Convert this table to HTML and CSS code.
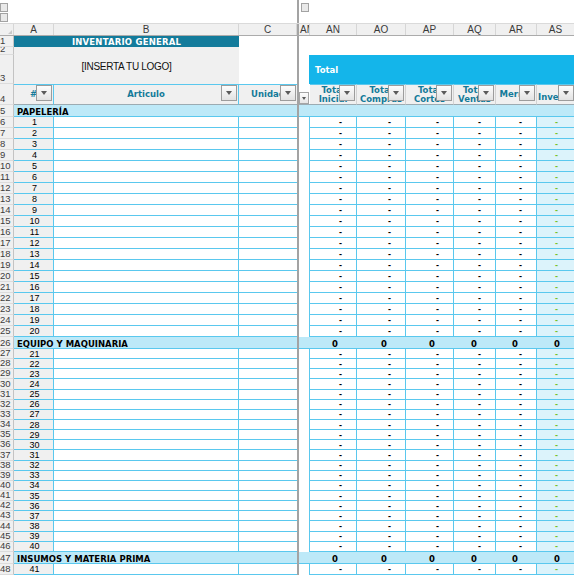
FILE: index.html
```html
<!DOCTYPE html>
<html lang="es">
<head>
<meta charset="utf-8">
<title>Inventario General</title>
<link rel="stylesheet" href="styles.css">
</head>
<body>
<div class="sheet">
  <div class="top">
    <div class="tl"><span class="ob"></span><span class="ob"></span></div>
    <div class="fz"></div>
    <div class="tr"><span class="ob"></span></div>
  </div>

  <div class="row ch">
    <div class="corner"></div><div>A</div><div>B</div><div>C</div><div class="fz"></div><div class="am">AM</div><div>AN</div><div>AO</div><div>AP</div><div>AQ</div><div>AR</div><div>AS</div>
  </div>

  <div class="row r1">
    <div class="rh">1</div><div class="title">INVENTARIO GENERAL</div><div class="c"></div><div class="fz"></div><div class="am"></div><div class="blank"></div>
  </div>

  <div class="row logo">
    <div class="rh rh2">2</div><div class="rh rh3">3</div>
    <div class="img">[INSERTA TU LOGO]</div>
    <div class="c"></div><div class="fz"></div><div class="am"></div>
    <div class="blank"></div>
    <div class="band">Total</div>
  </div>

  <div class="row hdr">
    <div class="rh">4</div>
    <div class="h a">#<span class="dd"></span></div>
    <div class="h b">Articulo<span class="dd"></span></div>
    <div class="h c">Unidad<span class="dd"></span></div>
    <div class="fz"></div>
    <div class="am"><span class="ddm"></span></div>
    <div class="h n"><span class="t2">Total<br>Inicial</span><span class="dd"></span></div>
    <div class="h n"><span class="t2">Total<br>Compras</span><span class="dd"></span></div>
    <div class="h n"><span class="t2">Total<br>Cortes</span><span class="dd"></span></div>
    <div class="h n"><span class="t2">Total<br>Ventas</span><span class="dd"></span></div>
    <div class="h n">Merma<span class="dd"></span></div>
    <div class="h s">Inventario<span class="dd"></span></div>
  </div>

  <div class="row sec"><div class="rh">5</div><div class="lbl">PAPELERÍA</div><div class="fz"></div><div class="am"></div><div class="z"></div><div class="z"></div><div class="z"></div><div class="z"></div><div class="z"></div><div class="z s"></div></div>

  <div class="row d"><div class="rh">6</div><div class="a">1</div><div class="b"></div><div class="c"></div><div class="fz"></div><div class="am"></div><div class="v">-</div><div class="v">-</div><div class="v">-</div><div class="v">-</div><div class="v">-</div><div class="s">-</div></div>
  <div class="row d"><div class="rh">7</div><div class="a">2</div><div class="b"></div><div class="c"></div><div class="fz"></div><div class="am"></div><div class="v">-</div><div class="v">-</div><div class="v">-</div><div class="v">-</div><div class="v">-</div><div class="s">-</div></div>
  <div class="row d"><div class="rh">8</div><div class="a">3</div><div class="b"></div><div class="c"></div><div class="fz"></div><div class="am"></div><div class="v">-</div><div class="v">-</div><div class="v">-</div><div class="v">-</div><div class="v">-</div><div class="s">-</div></div>
  <div class="row d"><div class="rh">9</div><div class="a">4</div><div class="b"></div><div class="c"></div><div class="fz"></div><div class="am"></div><div class="v">-</div><div class="v">-</div><div class="v">-</div><div class="v">-</div><div class="v">-</div><div class="s">-</div></div>
  <div class="row d"><div class="rh">10</div><div class="a">5</div><div class="b"></div><div class="c"></div><div class="fz"></div><div class="am"></div><div class="v">-</div><div class="v">-</div><div class="v">-</div><div class="v">-</div><div class="v">-</div><div class="s">-</div></div>
  <div class="row d"><div class="rh">11</div><div class="a">6</div><div class="b"></div><div class="c"></div><div class="fz"></div><div class="am"></div><div class="v">-</div><div class="v">-</div><div class="v">-</div><div class="v">-</div><div class="v">-</div><div class="s">-</div></div>
  <div class="row d"><div class="rh">12</div><div class="a">7</div><div class="b"></div><div class="c"></div><div class="fz"></div><div class="am"></div><div class="v">-</div><div class="v">-</div><div class="v">-</div><div class="v">-</div><div class="v">-</div><div class="s">-</div></div>
  <div class="row d"><div class="rh">13</div><div class="a">8</div><div class="b"></div><div class="c"></div><div class="fz"></div><div class="am"></div><div class="v">-</div><div class="v">-</div><div class="v">-</div><div class="v">-</div><div class="v">-</div><div class="s">-</div></div>
  <div class="row d"><div class="rh">14</div><div class="a">9</div><div class="b"></div><div class="c"></div><div class="fz"></div><div class="am"></div><div class="v">-</div><div class="v">-</div><div class="v">-</div><div class="v">-</div><div class="v">-</div><div class="s">-</div></div>
  <div class="row d"><div class="rh">15</div><div class="a">10</div><div class="b"></div><div class="c"></div><div class="fz"></div><div class="am"></div><div class="v">-</div><div class="v">-</div><div class="v">-</div><div class="v">-</div><div class="v">-</div><div class="s">-</div></div>
  <div class="row d"><div class="rh">16</div><div class="a">11</div><div class="b"></div><div class="c"></div><div class="fz"></div><div class="am"></div><div class="v">-</div><div class="v">-</div><div class="v">-</div><div class="v">-</div><div class="v">-</div><div class="s">-</div></div>
  <div class="row d"><div class="rh">17</div><div class="a">12</div><div class="b"></div><div class="c"></div><div class="fz"></div><div class="am"></div><div class="v">-</div><div class="v">-</div><div class="v">-</div><div class="v">-</div><div class="v">-</div><div class="s">-</div></div>
  <div class="row d"><div class="rh">18</div><div class="a">13</div><div class="b"></div><div class="c"></div><div class="fz"></div><div class="am"></div><div class="v">-</div><div class="v">-</div><div class="v">-</div><div class="v">-</div><div class="v">-</div><div class="s">-</div></div>
  <div class="row d"><div class="rh">19</div><div class="a">14</div><div class="b"></div><div class="c"></div><div class="fz"></div><div class="am"></div><div class="v">-</div><div class="v">-</div><div class="v">-</div><div class="v">-</div><div class="v">-</div><div class="s">-</div></div>
  <div class="row d"><div class="rh">20</div><div class="a">15</div><div class="b"></div><div class="c"></div><div class="fz"></div><div class="am"></div><div class="v">-</div><div class="v">-</div><div class="v">-</div><div class="v">-</div><div class="v">-</div><div class="s">-</div></div>
  <div class="row d"><div class="rh">21</div><div class="a">16</div><div class="b"></div><div class="c"></div><div class="fz"></div><div class="am"></div><div class="v">-</div><div class="v">-</div><div class="v">-</div><div class="v">-</div><div class="v">-</div><div class="s">-</div></div>
  <div class="row d"><div class="rh">22</div><div class="a">17</div><div class="b"></div><div class="c"></div><div class="fz"></div><div class="am"></div><div class="v">-</div><div class="v">-</div><div class="v">-</div><div class="v">-</div><div class="v">-</div><div class="s">-</div></div>
  <div class="row d"><div class="rh">23</div><div class="a">18</div><div class="b"></div><div class="c"></div><div class="fz"></div><div class="am"></div><div class="v">-</div><div class="v">-</div><div class="v">-</div><div class="v">-</div><div class="v">-</div><div class="s">-</div></div>
  <div class="row d"><div class="rh">24</div><div class="a">19</div><div class="b"></div><div class="c"></div><div class="fz"></div><div class="am"></div><div class="v">-</div><div class="v">-</div><div class="v">-</div><div class="v">-</div><div class="v">-</div><div class="s">-</div></div>
  <div class="row d"><div class="rh">25</div><div class="a">20</div><div class="b"></div><div class="c"></div><div class="fz"></div><div class="am"></div><div class="v">-</div><div class="v">-</div><div class="v">-</div><div class="v">-</div><div class="v">-</div><div class="s">-</div></div>

  <div class="row sec"><div class="rh">26</div><div class="lbl">EQUIPO Y MAQUINARIA</div><div class="fz"></div><div class="am"></div><div class="z">0</div><div class="z">0</div><div class="z">0</div><div class="z">0</div><div class="z">0</div><div class="z s">0</div></div>

  <div class="row d sm"><div class="rh">27</div><div class="a">21</div><div class="b"></div><div class="c"></div><div class="fz"></div><div class="am"></div><div class="v">-</div><div class="v">-</div><div class="v">-</div><div class="v">-</div><div class="v">-</div><div class="s">-</div></div>
  <div class="row d sm"><div class="rh">28</div><div class="a">22</div><div class="b"></div><div class="c"></div><div class="fz"></div><div class="am"></div><div class="v">-</div><div class="v">-</div><div class="v">-</div><div class="v">-</div><div class="v">-</div><div class="s">-</div></div>
  <div class="row d sm"><div class="rh">29</div><div class="a">23</div><div class="b"></div><div class="c"></div><div class="fz"></div><div class="am"></div><div class="v">-</div><div class="v">-</div><div class="v">-</div><div class="v">-</div><div class="v">-</div><div class="s">-</div></div>
  <div class="row d sm"><div class="rh">30</div><div class="a">24</div><div class="b"></div><div class="c"></div><div class="fz"></div><div class="am"></div><div class="v">-</div><div class="v">-</div><div class="v">-</div><div class="v">-</div><div class="v">-</div><div class="s">-</div></div>
  <div class="row d sm"><div class="rh">31</div><div class="a">25</div><div class="b"></div><div class="c"></div><div class="fz"></div><div class="am"></div><div class="v">-</div><div class="v">-</div><div class="v">-</div><div class="v">-</div><div class="v">-</div><div class="s">-</div></div>
  <div class="row d sm"><div class="rh">32</div><div class="a">26</div><div class="b"></div><div class="c"></div><div class="fz"></div><div class="am"></div><div class="v">-</div><div class="v">-</div><div class="v">-</div><div class="v">-</div><div class="v">-</div><div class="s">-</div></div>
  <div class="row d sm"><div class="rh">33</div><div class="a">27</div><div class="b"></div><div class="c"></div><div class="fz"></div><div class="am"></div><div class="v">-</div><div class="v">-</div><div class="v">-</div><div class="v">-</div><div class="v">-</div><div class="s">-</div></div>
  <div class="row d sm"><div class="rh">34</div><div class="a">28</div><div class="b"></div><div class="c"></div><div class="fz"></div><div class="am"></div><div class="v">-</div><div class="v">-</div><div class="v">-</div><div class="v">-</div><div class="v">-</div><div class="s">-</div></div>
  <div class="row d sm"><div class="rh">35</div><div class="a">29</div><div class="b"></div><div class="c"></div><div class="fz"></div><div class="am"></div><div class="v">-</div><div class="v">-</div><div class="v">-</div><div class="v">-</div><div class="v">-</div><div class="s">-</div></div>
  <div class="row d sm"><div class="rh">36</div><div class="a">30</div><div class="b"></div><div class="c"></div><div class="fz"></div><div class="am"></div><div class="v">-</div><div class="v">-</div><div class="v">-</div><div class="v">-</div><div class="v">-</div><div class="s">-</div></div>
  <div class="row d sm"><div class="rh">37</div><div class="a">31</div><div class="b"></div><div class="c"></div><div class="fz"></div><div class="am"></div><div class="v">-</div><div class="v">-</div><div class="v">-</div><div class="v">-</div><div class="v">-</div><div class="s">-</div></div>
  <div class="row d sm"><div class="rh">38</div><div class="a">32</div><div class="b"></div><div class="c"></div><div class="fz"></div><div class="am"></div><div class="v">-</div><div class="v">-</div><div class="v">-</div><div class="v">-</div><div class="v">-</div><div class="s">-</div></div>
  <div class="row d sm"><div class="rh">39</div><div class="a">33</div><div class="b"></div><div class="c"></div><div class="fz"></div><div class="am"></div><div class="v">-</div><div class="v">-</div><div class="v">-</div><div class="v">-</div><div class="v">-</div><div class="s">-</div></div>
  <div class="row d sm"><div class="rh">40</div><div class="a">34</div><div class="b"></div><div class="c"></div><div class="fz"></div><div class="am"></div><div class="v">-</div><div class="v">-</div><div class="v">-</div><div class="v">-</div><div class="v">-</div><div class="s">-</div></div>
  <div class="row d sm"><div class="rh">41</div><div class="a">35</div><div class="b"></div><div class="c"></div><div class="fz"></div><div class="am"></div><div class="v">-</div><div class="v">-</div><div class="v">-</div><div class="v">-</div><div class="v">-</div><div class="s">-</div></div>
  <div class="row d sm"><div class="rh">42</div><div class="a">36</div><div class="b"></div><div class="c"></div><div class="fz"></div><div class="am"></div><div class="v">-</div><div class="v">-</div><div class="v">-</div><div class="v">-</div><div class="v">-</div><div class="s">-</div></div>
  <div class="row d sm"><div class="rh">43</div><div class="a">37</div><div class="b"></div><div class="c"></div><div class="fz"></div><div class="am"></div><div class="v">-</div><div class="v">-</div><div class="v">-</div><div class="v">-</div><div class="v">-</div><div class="s">-</div></div>
  <div class="row d sm"><div class="rh">44</div><div class="a">38</div><div class="b"></div><div class="c"></div><div class="fz"></div><div class="am"></div><div class="v">-</div><div class="v">-</div><div class="v">-</div><div class="v">-</div><div class="v">-</div><div class="s">-</div></div>
  <div class="row d sm"><div class="rh">45</div><div class="a">39</div><div class="b"></div><div class="c"></div><div class="fz"></div><div class="am"></div><div class="v">-</div><div class="v">-</div><div class="v">-</div><div class="v">-</div><div class="v">-</div><div class="s">-</div></div>
  <div class="row d sm"><div class="rh">46</div><div class="a">40</div><div class="b"></div><div class="c"></div><div class="fz"></div><div class="am"></div><div class="v">-</div><div class="v">-</div><div class="v">-</div><div class="v">-</div><div class="v">-</div><div class="s">-</div></div>

  <div class="row sec"><div class="rh">47</div><div class="lbl">INSUMOS Y MATERIA PRIMA</div><div class="fz"></div><div class="am"></div><div class="z">0</div><div class="z">0</div><div class="z">0</div><div class="z">0</div><div class="z">0</div><div class="z s">0</div></div>

  <div class="row d"><div class="rh">48</div><div class="a">41</div><div class="b"></div><div class="c"></div><div class="fz"></div><div class="am"></div><div class="v">-</div><div class="v">-</div><div class="v">-</div><div class="v">-</div><div class="v">-</div><div class="s">-</div></div>
</div>
</body>
</html>
```

FILE: styles.css
```css
:root {
  --cy: #5ac8ee;
  --teal: #137b9b;
  --band: #14b5ea;
  --sec: #bde9f8;
  --g: #f0f0f0;
  --hd: #137a99;
}
* { box-sizing: border-box; margin: 0; padding: 0; }
html, body { width: 574px; height: 575px; overflow: hidden; background: #fff; }
body { font-family: "Liberation Sans", Arial, sans-serif; font-size: 8px; color: #000; }
.sheet { width: 574px; height: 575px; overflow: hidden; }

/* top outline bar */
.top { display: grid; grid-template-columns: 297px 2px 1fr; height: 23px; }
.tl { display: flex; flex-direction: column; gap: 1px; padding-top: 3px; }
.tr { padding: 3px 0 0 2px; }
.ob { display: block; width: 8px; height: 9px; border: 1px solid #a3a3a3; background: #e9e9e9; }
.top > .fz { background: #a3a3a3; }

/* generic row */
.row {
  display: grid;
  grid-template-columns: 14px 40px 185px 58px 2px 11px 47px 49px 48px 42px 41px 38px;
  height: 11px;
}
.row > div {
  display: flex; align-items: center; overflow: hidden; white-space: nowrap;
  position: relative; min-width: 0;
}
.row > .fz { background: #a3a3a3; border: 0; padding: 0; }
.row > .rh {
  background: var(--g); border-right: 1px solid #c3c3c3; border-bottom: 1px solid #dcdcdc;
  font-size: 9.5px; line-height: 10px; color: #3d3d3d; align-items: flex-end;
}

/* column letters */
.ch { height: 13px; border-top: 1px solid #dadada; border-bottom: 1px solid #ababab; background: var(--g); }
.ch > div { justify-content: center; font-size: 10px; line-height: 11px; color: #3a3a3a; border-right: 1px solid #d6d6d6; }
.ch > .am { justify-content: flex-start; padding-left: 1px; }
.ch > .corner::after {
  content: ""; position: absolute; right: 1px; bottom: 1px;
  border-left: 4px solid transparent; border-bottom: 4px solid #c9c9c9;
}

/* row 1 */
.r1 > .title {
  grid-column: span 2; background: var(--teal); color: #fff; justify-content: center;
  font: bold 8.5px/10px "DejaVu Sans", sans-serif; letter-spacing: 0.2px;
}
.r1 > .blank { grid-column: span 6; }

/* rows 2-3 */
.logo { height: 37px; grid-template-rows: 8px 29px; }
.logo > .rh2 { grid-column: 1; grid-row: 1; }
.logo > .rh3 { grid-column: 1; grid-row: 2; }
.logo > .img {
  grid-column: 2 / 4; grid-row: 1 / 3; background: var(--g); justify-content: center;
  font-size: 10px; letter-spacing: -0.3px; color: #111; padding-top: 1px;
}
.logo > .c { grid-column: 4; grid-row: 1 / 3; }
.logo > .fz { grid-column: 5; grid-row: 1 / 3; }
.logo > .am { grid-column: 6; grid-row: 1 / 3; }
.logo > .blank { grid-column: 7 / 13; grid-row: 1; }
.logo > .band {
  grid-column: 7 / 13; grid-row: 2; margin-left: -1px; background: var(--band); color: #fff;
  font: bold 8.5px/10px "DejaVu Sans", sans-serif; padding-left: 6px;
}

/* row 4 headers */
.hdr { height: 21px; }
.hdr > .h {
  background: var(--g); border-top: 1px solid var(--cy); border-bottom: 1px solid #9cabb2;
  justify-content: center; text-align: center; color: var(--hd);
  font: bold 8.5px/9px "DejaVu Sans", sans-serif;
}
.hdr > .h.a, .hdr > .h.b { border-right: 1px solid var(--cy); }
.hdr > .h.n { border-right: 1px solid #d3d3d3; }
.hdr > .h.s { justify-content: flex-start; align-items: flex-end; padding: 0 0 2px 1px; }
.hdr > .am { border-bottom: 1px solid #9cabb2; }
.t2 { display: block; }
.dd {
  position: absolute; right: 1px; top: 0; width: 16px; height: 16px;
  border: 1px solid #9c9c9c; background: linear-gradient(#fdfdfd, #e2e2e2);
}
.dd::after {
  content: ""; position: absolute; left: 4px; top: 5px;
  border-left: 3px solid transparent; border-right: 3px solid transparent; border-top: 4px solid #5a5a5a;
}
.ddm {
  position: absolute; left: 0; bottom: 0; width: 10px; height: 12px;
  border: 1px solid #a5a5a5; background: linear-gradient(#fdfdfd, #e6e6e6);
}
.ddm::after {
  content: ""; position: absolute; left: 2px; top: 4px;
  border-left: 2px solid transparent; border-right: 2px solid transparent; border-top: 3px solid #5a5a5a;
}

/* section rows */
.sec { height: 12px; }
.sec > .lbl {
  grid-column: span 3; background: var(--sec); border-bottom: 1px solid var(--cy);
  font: bold 8.5px/8px "DejaVu Sans", sans-serif; padding-left: 3px; align-items: flex-end;
}
.sec > .am, .sec > .z { background: var(--sec); border-bottom: 1px solid var(--cy); }
.sec > .z {
  justify-content: flex-end; align-items: flex-end; padding-right: 19px;
  font: bold 8.5px/8px "DejaVu Sans", sans-serif;
}
.sec > .z.s { justify-content: flex-start; padding: 0 0 0 17px; }

/* data rows */
.sm { height: 10.15px; }
.d > .a {
  background: var(--g); border-right: 1px solid var(--cy); border-bottom: 1px solid var(--cy);
  justify-content: center; font-size: 9px; line-height: 10px; padding-left: 2px;
}
.d > .b { border-right: 1px solid var(--cy); border-bottom: 1px solid var(--cy); }
.d > .c { border-bottom: 1px solid var(--cy); }
.d > .am { border-right: 1px solid var(--cy); }
.d > .v {
  border-right: 1px solid var(--cy); border-bottom: 1px solid var(--cy);
  justify-content: flex-end; padding-right: 14px; font-weight: bold; font-size: 9px; line-height: 10px;
}
.d > .s {
  background: #dcf3fb; border-right: 1px solid var(--cy); border-bottom: 1px solid var(--cy);
  padding-left: 18px; color: #78c12a; font-weight: bold; font-size: 9px; line-height: 10px;
}
```
